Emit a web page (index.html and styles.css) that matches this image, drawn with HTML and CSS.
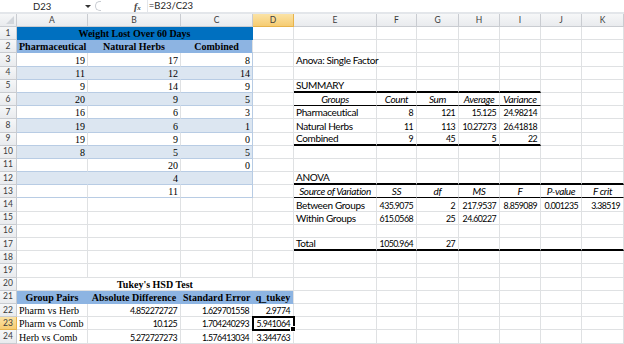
FILE: index.html
```html
<!DOCTYPE html>
<html lang="en">

<head>
    <meta charset="UTF-8">
    <meta name="viewport" content="width=device-width, initial-scale=1.0">
    <title>Weight Lost Over 60 Days - Tukey's HSD Test</title>
    <link rel="stylesheet" href="styles.css">
</head>

<body>
    <div class="formula-bar">
        <div class="name-box">D23</div>
        <span class="drop"></span>
        <span class="grip"></span>
        <span class="fx">f<small>x</small></span>
        <div class="formula">=B23/C23</div>
    </div>

    <table class="sheet">
        <colgroup>
            <col class="w-row">
            <col class="w-a">
            <col class="w-b">
            <col class="w-c">
            <col class="w-d">
            <col class="w-e">
            <col class="w-f">
            <col class="w-g">
            <col class="w-h">
            <col class="w-i">
            <col class="w-j">
            <col class="w-k">
        </colgroup>

        <tr class="col-heads">
            <th class="corner"><span class="all"></span></th>
            <th>A</th><th>B</th><th>C</th><th class="active">D</th><th>E</th>
            <th>F</th><th>G</th><th>H</th><th>I</th><th>J</th><th>K</th>
        </tr>

        <tr>
            <th>1</th>
            <td colspan="3" class="title">Weight Lost Over 60 Days</td>
            <td></td><td></td><td></td><td></td><td></td><td></td><td></td><td></td>
        </tr>
        <tr>
            <th>2</th>
            <td class="thead">Pharmaceutical</td>
            <td class="thead">Natural Herbs</td>
            <td class="thead last">Combined</td>
            <td></td><td></td><td></td><td></td><td></td><td></td><td></td><td></td>
        </tr>
        <tr>
            <th>3</th>
            <td class="tb num">19</td><td class="tb num">17</td><td class="tb num last">8</td>
            <td></td><td class="cal">Anova: Single Factor</td>
            <td></td><td></td><td></td><td></td><td></td><td></td>
        </tr>
        <tr>
            <th>4</th>
            <td class="tb band num">11</td><td class="tb band num">12</td><td class="tb band num last">14</td>
            <td></td><td></td><td></td><td></td><td></td><td></td><td></td><td></td>
        </tr>
        <tr>
            <th>5</th>
            <td class="tb num">9</td><td class="tb num">14</td><td class="tb num last">9</td>
            <td></td>
            <td class="cal thick">SUMMARY</td>
            <td class="thick"></td><td class="thick"></td><td class="thick"></td><td class="thick"></td>
            <td></td><td></td>
        </tr>
        <tr>
            <th>6</th>
            <td class="tb band num">20</td><td class="tb band num">9</td><td class="tb band num last">5</td>
            <td></td>
            <td class="cal ital thin">Groups</td>
            <td class="cal ital thin">Count</td>
            <td class="cal ital thin">Sum</td>
            <td class="cal ital thin">Average</td>
            <td class="cal ital thin">Variance</td>
            <td></td><td></td>
        </tr>
        <tr>
            <th>7</th>
            <td class="tb num">16</td><td class="tb num">6</td><td class="tb num last">3</td>
            <td></td>
            <td class="cal">Pharmaceutical</td>
            <td class="cal num">8</td><td class="cal num">121</td><td class="cal num">15.125</td><td class="cal num">24.98214</td>
            <td></td><td></td>
        </tr>
        <tr>
            <th>8</th>
            <td class="tb band num">19</td><td class="tb band num">6</td><td class="tb band num last">1</td>
            <td></td>
            <td class="cal">Natural Herbs</td>
            <td class="cal num">11</td><td class="cal num">113</td><td class="cal num">10.27273</td><td class="cal num">26.41818</td>
            <td></td><td></td>
        </tr>
        <tr>
            <th>9</th>
            <td class="tb num">19</td><td class="tb num">9</td><td class="tb num last">0</td>
            <td></td>
            <td class="cal thick">Combined</td>
            <td class="cal num thick">9</td><td class="cal num thick">45</td><td class="cal num thick">5</td><td class="cal num thick">22</td>
            <td></td><td></td>
        </tr>
        <tr>
            <th>10</th>
            <td class="tb band num">8</td><td class="tb band num">5</td><td class="tb band num last">5</td>
            <td></td><td></td><td></td><td></td><td></td><td></td><td></td><td></td>
        </tr>
        <tr>
            <th>11</th>
            <td class="tb num"></td><td class="tb num">20</td><td class="tb num last">0</td>
            <td></td><td></td><td></td><td></td><td></td><td></td><td></td><td></td>
        </tr>
        <tr>
            <th>12</th>
            <td class="tb band num"></td><td class="tb band num">4</td><td class="tb band num last"></td>
            <td></td>
            <td class="cal thick">ANOVA</td>
            <td class="thick"></td><td class="thick"></td><td class="thick"></td><td class="thick"></td><td class="thick"></td><td class="thick"></td>
        </tr>
        <tr>
            <th>13</th>
            <td class="tb num"></td><td class="tb num">11</td><td class="tb num last"></td>
            <td></td>
            <td class="cal ital thin">Source of Variation</td>
            <td class="cal ital thin">SS</td>
            <td class="cal ital thin">df</td>
            <td class="cal ital thin">MS</td>
            <td class="cal ital thin">F</td>
            <td class="cal ital thin">P-value</td>
            <td class="cal ital thin">F crit</td>
        </tr>
        <tr>
            <th>14</th>
            <td></td><td></td><td></td><td></td>
            <td class="cal">Between Groups</td>
            <td class="cal num">435.9075</td><td class="cal num">2</td><td class="cal num">217.9537</td>
            <td class="cal num">8.859089</td><td class="cal num">0.001235</td><td class="cal num">3.38519</td>
        </tr>
        <tr>
            <th>15</th>
            <td></td><td></td><td></td><td></td>
            <td class="cal">Within Groups</td>
            <td class="cal num">615.0568</td><td class="cal num">25</td><td class="cal num">24.60227</td>
            <td></td><td></td><td></td>
        </tr>
        <tr>
            <th>16</th>
            <td></td><td></td><td></td><td></td><td></td><td></td><td></td><td></td><td></td><td></td><td></td>
        </tr>
        <tr>
            <th>17</th>
            <td></td><td></td><td></td><td></td>
            <td class="cal thick">Total</td>
            <td class="cal num thick">1050.964</td><td class="cal num thick">27</td>
            <td class="thick"></td><td class="thick"></td><td class="thick"></td><td class="thick"></td>
        </tr>
        <tr>
            <th>18</th>
            <td></td><td></td><td></td><td></td><td></td><td></td><td></td><td></td><td></td><td></td><td></td>
        </tr>
        <tr>
            <th>19</th>
            <td></td><td></td><td></td><td></td><td></td><td></td><td></td><td></td><td></td><td></td><td></td>
        </tr>
        <tr>
            <th>20</th>
            <td colspan="4" class="tukey-title">Tukey's HSD Test</td>
            <td></td><td></td><td></td><td></td><td></td><td></td><td></td>
        </tr>
        <tr>
            <th>21</th>
            <td class="thead">Group Pairs</td>
            <td class="thead">Absolute Difference</td>
            <td class="thead">Standard Error</td>
            <td class="thead last">q_tukey</td>
            <td></td><td></td><td></td><td></td><td></td><td></td><td></td>
        </tr>
        <tr>
            <th>22</th>
            <td class="serif">Pharm vs Herb</td>
            <td class="cal num">4.852272727</td><td class="cal num">1.629701558</td><td class="cal num">2.9774</td>
            <td></td><td></td><td></td><td></td><td></td><td></td><td></td>
        </tr>
        <tr>
            <th class="active">23</th>
            <td class="serif">Pharm vs Comb</td>
            <td class="cal num">10.125</td><td class="cal num">1.704240293</td><td class="cal num selected">5.941064</td>
            <td></td><td></td><td></td><td></td><td></td><td></td><td></td>
        </tr>
        <tr>
            <th>24</th>
            <td class="serif">Herb vs Comb</td>
            <td class="cal num">5.272727273</td><td class="cal num">1.576413034</td><td class="cal num">3.344763</td>
            <td></td><td></td><td></td><td></td><td></td><td></td><td></td>
        </tr>
    </table>
</body>

</html>
```

FILE: styles.css
```css
body {
    margin: 0;
    padding: 0;
    width: 624px;
    height: 344px;
    overflow: hidden;
    background: #ffffff;
    font-family: "Liberation Serif", serif;
}

/* formula bar */
.formula-bar {
    display: flex;
    align-items: center;
    height: 12px;
    border-bottom: 2px solid #e3e6ea;
    font-family: Lato, sans-serif;
    font-size: 9.5px;
    color: #1e1e1e;
}

.name-box {
    width: 82px;
    padding-left: 33px;
    box-sizing: border-box;
}

.drop {
    width: 0;
    height: 0;
    margin-left: 3px;
    border-left: 3px solid transparent;
    border-right: 3px solid transparent;
    border-top: 3px solid #333333;
}

.grip {
    width: 6px;
    height: 10px;
    margin-left: 4px;
    border: 1px solid #c8ccd2;
    border-right: none;
    border-radius: 6px 0 0 6px;
    box-sizing: border-box;
}

.fx {
    margin-left: 33px;
    font-family: "Liberation Serif", serif;
    font-style: italic;
    font-weight: bold;
    font-size: 10px;
    color: #444444;
}

.fx small {
    font-size: 7px;
}

.formula {
    margin-left: 6px;
    padding-left: 1px;
    border-left: 1px solid #e3e6ea;
    line-height: 12px;
}

/* grid */
.sheet {
    table-layout: fixed;
    border-collapse: separate;
    border-spacing: 0;
    width: 624px;
}

.w-row { width: 17px; }
.w-a { width: 71px; }
.w-b { width: 93px; }
.w-c { width: 72px; }
.w-d { width: 41px; }
.w-e { width: 83px; }
.w-f { width: 40px; }
.w-g { width: 42px; }
.w-h { width: 41px; }
.w-i { width: 41px; }
.w-j { width: 41px; }
.w-k { width: 42px; }

.sheet tr {
    height: 13.2px;
}

.sheet tr.col-heads {
    height: 13px;
}

.sheet th {
    padding: 0;
    font-family: Lato, sans-serif;
    font-weight: normal;
    font-size: 8.5px;
    color: #3c3c3c;
    background: linear-gradient(#f6f7f8, #e9ebee);
    border-right: 1px solid #c9ccd1;
    border-bottom: 1px solid #c9ccd1;
    text-align: center;
    line-height: 11px;
}

.sheet th.active {
    background: linear-gradient(#fbe3a6, #f6cc72);
    border-color: #e7b34b;
}

.sheet th.corner {
    position: relative;
}

.corner .all {
    position: absolute;
    right: 2px;
    bottom: 2px;
    width: 0;
    height: 0;
    border-left: 8px solid transparent;
    border-bottom: 8px solid #d2d6db;
}

.sheet td {
    padding: 0 2px;
    border-right: 1px solid #dfe1e3;
    border-bottom: 1px solid #dfe1e3;
    font-size: 10px;
    line-height: 11px;
    vertical-align: bottom;
    white-space: nowrap;
    overflow: visible;
    color: #000000;
}

/* weight lost table */
.title {
    background: #0070c0;
    color: #ffffff;
    font-weight: bold;
    text-align: center;
    font-size: 10.8px;
    border-right-color: #0070c0 !important;
    border-bottom-color: #0070c0 !important;
}

.thead {
    background: #8db4e2;
    font-weight: bold;
    text-align: center;
    font-size: 9.7px;
    border-right-color: #8db4e2 !important;
    border-bottom-color: #8db4e2 !important;
}

.thead.last {
    border-right-color: #dfe1e3 !important;
}

.tb {
    border-bottom-color: #b8cce4 !important;
}

.tb.band {
    background: #dce6f1;
    border-right-color: #dce6f1 !important;
}

.tb.last {
    border-right-color: #b8cce4 !important;
}

.num {
    text-align: right;
}

.serif {
    font-family: "Liberation Serif", serif;
}

.tukey-title {
    font-weight: bold;
    text-align: center;
    font-size: 9.7px;
}

/* analysis output */
.cal {
    font-family: Lato, sans-serif;
    font-size: 9.3px;
    letter-spacing: -0.35px;
}

.cal.num {
    font-size: 8.8px;
    letter-spacing: -0.55px;
    padding-right: 3px;
}

.ital {
    font-style: italic;
    text-align: center;
}

.thick {
    border-bottom: 2px solid #000000 !important;
}

.thin {
    border-bottom: 1px solid #000000 !important;
}

.selected {
    position: relative;
    outline: 2px solid #000000;
    outline-offset: -1px;
}

.selected::after {
    content: "";
    position: absolute;
    right: -3px;
    bottom: -3px;
    width: 4px;
    height: 4px;
    background: #000000;
    border: 1px solid #ffffff;
}
```
